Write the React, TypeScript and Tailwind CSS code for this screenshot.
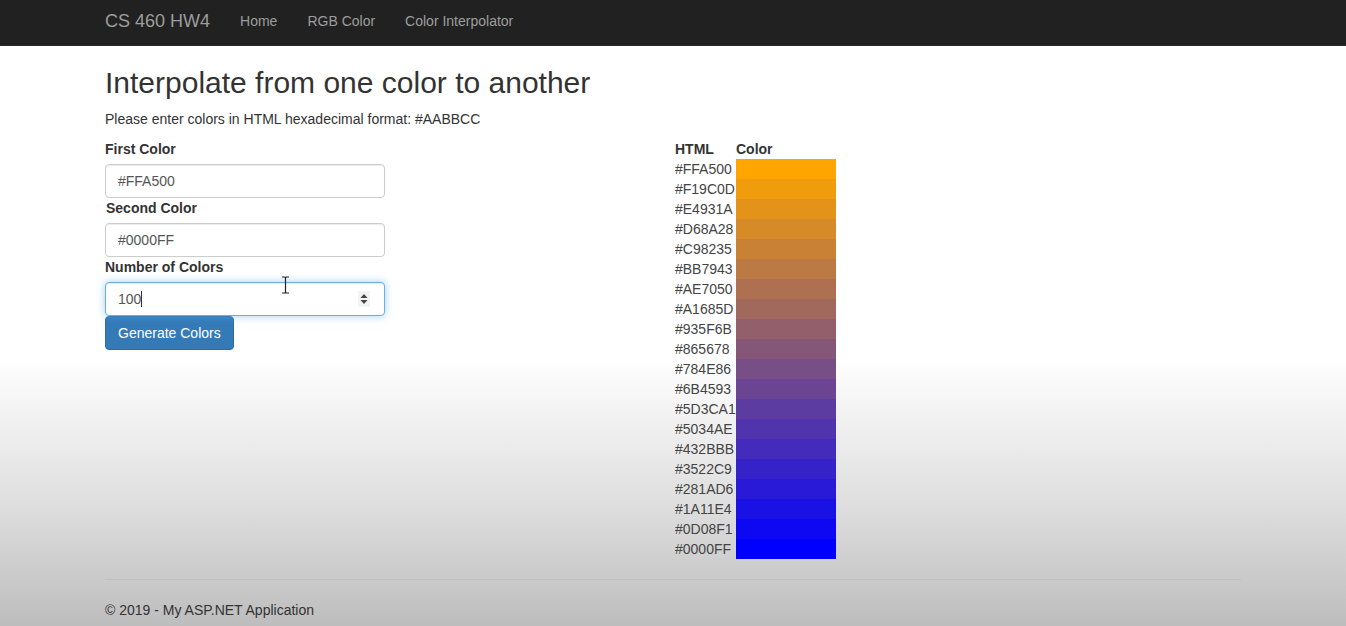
const colors = [
  '#FFA500', '#F19C0D', '#E4931A', '#D68A28', '#C98235',
  '#BB7943', '#AE7050', '#A1685D', '#935F6B', '#865678',
  '#784E86', '#6B4593', '#5D3CA1', '#5034AE', '#432BBB',
  '#3522C9', '#281AD6', '#1A11E4', '#0D08F1', '#0000FF',
];

const navLinks = ['Home', 'RGB Color', 'Color Interpolator'];

const inputClass =
  'block w-full max-w-[280px] h-[34px] px-3 py-1.5 text-sm text-[#555] bg-white border border-[#ccc] rounded shadow-[inset_0_1px_1px_rgba(0,0,0,0.075)] outline-none';

const App = () => {
  return (
    <div className="min-h-screen h-[626px] bg-[linear-gradient(to_bottom,#fff_0%,#fff_57%,#f0f0f0_68%,#dcdcdc_82%,#bdbdbd_100%)] font-['Liberation_Sans',Arial,sans-serif] text-sm leading-5 text-[#333]">
      {/* navbar */}
      <nav className="h-[46px] bg-[#212121] border-b border-[#2c2c2c]">
        <div className="w-[1170px] mx-auto px-[17px] flex items-start">
          <a className="text-[18px] leading-5 text-[#9d9d9d] pt-[11px] pr-[15px]">CS 460 HW4</a>
          <ul className="flex">
            {navLinks.map((link) => (
              <li key={link}>
                <a className="block px-[15px] pt-[11px] text-sm leading-5 text-[#9d9d9d]">{link}</a>
              </li>
            ))}
          </ul>
        </div>
      </nav>

      <div className="w-[1170px] mx-auto px-[17px]">
        <h2 className="text-[30px] leading-[33px] font-normal mt-5 mb-2.5">
          Interpolate from one color to another
        </h2>
        <p className="mb-2.5">Please enter colors in HTML hexadecimal format: #AABBCC</p>

        <div className="flex">
          {/* form */}
          <div className="w-[570px] relative">
            <label className="block font-bold mb-[5px]">First Color</label>
            <input className={inputClass} defaultValue="#FFA500" readOnly />
            <label className="block font-bold mb-[5px] pl-px">Second Color</label>
            <input className={inputClass} defaultValue="#0000FF" readOnly />
            <label className="block font-bold mb-[5px]">Number of Colors</label>
            <div className="relative flex items-center w-[280px] h-[34px] px-3 text-sm text-[#555] bg-white border border-[#66afe9] rounded shadow-[inset_0_1px_1px_rgba(0,0,0,0.075),0_0_8px_rgba(102,175,233,0.6)]">
              <span>100</span>
              <span className="w-px h-4 bg-[#333]" />
              <div className="absolute right-[14px] top-[8px] w-3 h-4 bg-[#f3f3f3] flex items-center justify-center">
                <svg width="8" height="12" viewBox="0 0 8 12">
                  <path d="M4 1 L7.5 5 H0.5 Z" fill="#444" />
                  <path d="M4 11 L7.5 7 H0.5 Z" fill="#444" />
                </svg>
              </div>
            </div>
            <button className="h-[34px] px-3 bg-[#337ab7] border border-[#2e6da4] rounded text-white text-sm">
              Generate Colors
            </button>
            {/* mouse cursor */}
            <svg className="absolute left-[176px] top-[137px]" width="9" height="18" viewBox="0 0 9 18">
              <path d="M1 1 H3.5 Q4.5 1 4.5 2 Q4.5 1 5.5 1 H8 M4.5 2 V16 M1 17 H3.5 Q4.5 17 4.5 16 Q4.5 17 5.5 17 H8" stroke="#222" strokeWidth="1.2" fill="none" />
            </svg>
          </div>

          {/* color table */}
          <table className="border-collapse">
            <thead>
              <tr>
                <th className="text-left font-bold w-[61px] h-5 p-0">HTML</th>
                <th className="text-left font-bold w-[100px] h-5 p-0">Color</th>
              </tr>
            </thead>
            <tbody>
              {colors.map((c) => (
                <tr key={c}>
                  <td className="h-5 p-0 text-[#444]">{c}</td>
                  <td className="h-5 p-0" style={{ backgroundColor: c }} />
                </tr>
              ))}
            </tbody>
          </table>
        </div>

        <hr className="mt-5 mb-5 border-t border-[rgba(0,0,0,0.05)]" />
        <footer>
          <p>© 2019 - My ASP.NET Application</p>
        </footer>
      </div>
    </div>
  );
};

export default App;
